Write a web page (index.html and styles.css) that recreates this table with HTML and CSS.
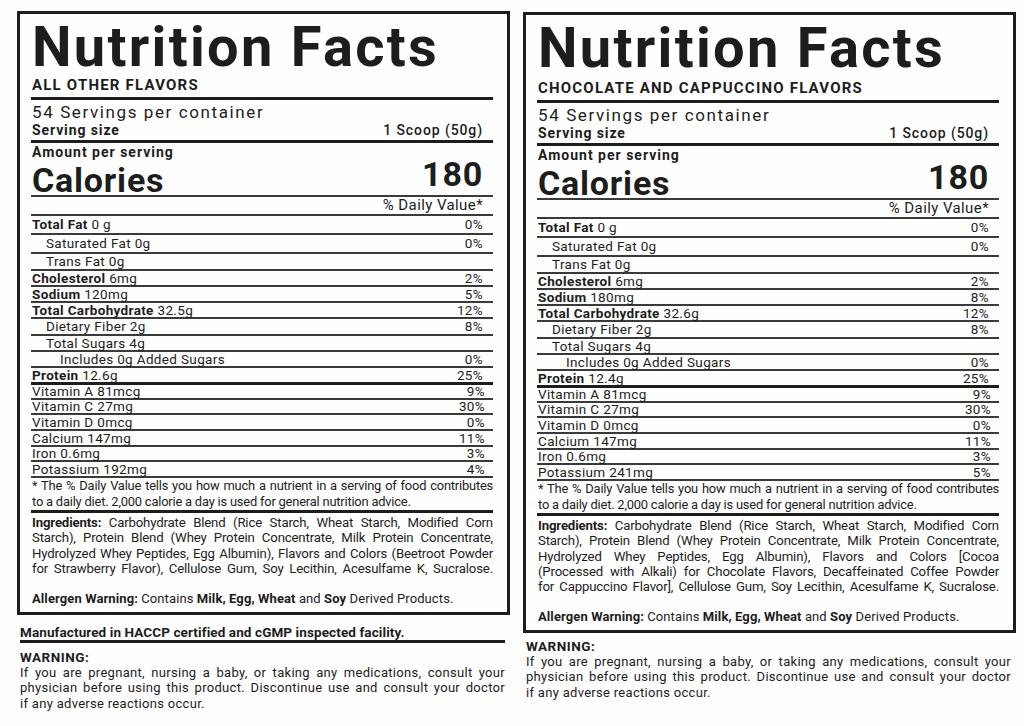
FILE: index.html
```html
<!DOCTYPE html>
<html lang="en">
<head>
<meta charset="utf-8">
<title>Nutrition Facts</title>
<link rel="stylesheet" href="styles.css">
</head>
<body>
<main class="page">
  <section class="col">
    <div class="label">
      <h1 class="title">Nutrition Facts</h1>
      <div class="flavor">ALL OTHER FLAVORS</div>
      <div class="servings">54 Servings per container</div>
      <div class="size"><span>Serving size</span><span>1 Scoop (50g)</span></div>
      <div class="amount">Amount per serving</div>
      <div class="cal"><span>Calories</span><span class="cal-num">180</span></div>
      <div class="dv">% Daily Value*</div>
      <div class="row h17"><span><b>Total Fat</b> 0 g</span><span>0%</span></div>
      <div class="row h17 in1"><span>Saturated Fat 0g</span><span>0%</span></div>
      <div class="row h15 in1"><span>Trans Fat 0g</span><span></span></div>
      <div class="row"><span><b>Cholesterol</b> 6mg</span><span>2%</span></div>
      <div class="row"><span><b>Sodium</b> 120mg</span><span>5%</span></div>
      <div class="row"><span><b>Total Carbohydrate</b> 32.5g</span><span>12%</span></div>
      <div class="row h15 in1"><span>Dietary Fiber 2g</span><span>8%</span></div>
      <div class="row in1"><span>Total Sugars 4g</span><span></span></div>
      <div class="row in2"><span>Includes 0g Added Sugars</span><span>0%</span></div>
      <div class="row thick"><span><b>Protein</b> 12.6g</span><span>25%</span></div>
      <div class="row h13 vit"><span>Vitamin A 81mcg</span><span>9%</span></div>
      <div class="row h13 vit"><span>Vitamin C 27mg</span><span>30%</span></div>
      <div class="row vit"><span>Vitamin D 0mcg</span><span>0%</span></div>
      <div class="row vit"><span>Calcium 147mg</span><span>11%</span></div>
      <div class="row h13 vit"><span>Iron 0.6mg</span><span>3%</span></div>
      <div class="row vit"><span>Potassium 192mg</span><span>4%</span></div>
      <p class="foot"><span class="jl">* The % Daily Value tells you how much a nutrient in a serving of food contributes</span>to a daily diet. 2,000 calorie a day is used for general nutrition advice.</p>
      <p class="ingr"><span class="jl"><b>Ingredients:</b> Carbohydrate Blend (Rice Starch, Wheat Starch, Modified Corn</span><span class="jl">Starch), Protein Blend (Whey Protein Concentrate, Milk Protein Concentrate,</span><span class="jl">Hydrolyzed Whey Peptides, Egg Albumin), Flavors and Colors (Beetroot Powder</span><span class="jl">for Strawberry Flavor), Cellulose Gum, Soy Lecithin, Acesulfame K, Sucralose.</span></p>
      <p class="allergen"><b>Allergen Warning:</b> Contains <b>Milk, Egg, Wheat</b> and <b>Soy</b> Derived Products.</p>
    </div>
    <p class="mfg">Manufactured in HACCP certified and cGMP inspected facility.</p>
    <div class="warn">
      <div class="warn-title">WARNING:</div>
      <p class="warn-text"><span class="jl">If you are pregnant, nursing a baby, or taking any medications, consult your</span><span class="jl">physician before using this product. Discontinue use and consult your doctor</span>if any adverse reactions occur.</p>
    </div>
  </section>

  <section class="col col-alt">
    <div class="label label-alt">
      <h1 class="title">Nutrition Facts</h1>
      <div class="flavor">CHOCOLATE AND CAPPUCCINO FLAVORS</div>
      <div class="servings">54 Servings per container</div>
      <div class="size"><span>Serving size</span><span>1 Scoop (50g)</span></div>
      <div class="amount">Amount per serving</div>
      <div class="cal"><span>Calories</span><span class="cal-num">180</span></div>
      <div class="dv">% Daily Value*</div>
      <div class="row h17"><span><b>Total Fat</b> 0 g</span><span>0%</span></div>
      <div class="row h17 in1"><span>Saturated Fat 0g</span><span>0%</span></div>
      <div class="row h15 in1"><span>Trans Fat 0g</span><span></span></div>
      <div class="row"><span><b>Cholesterol</b> 6mg</span><span>2%</span></div>
      <div class="row"><span><b>Sodium</b> 180mg</span><span>8%</span></div>
      <div class="row"><span><b>Total Carbohydrate</b> 32.6g</span><span>12%</span></div>
      <div class="row h15 in1"><span>Dietary Fiber 2g</span><span>8%</span></div>
      <div class="row in1"><span>Total Sugars 4g</span><span></span></div>
      <div class="row in2"><span>Includes 0g Added Sugars</span><span>0%</span></div>
      <div class="row thick"><span><b>Protein</b> 12.4g</span><span>25%</span></div>
      <div class="row h13 vit"><span>Vitamin A 81mcg</span><span>9%</span></div>
      <div class="row h13 vit"><span>Vitamin C 27mg</span><span>30%</span></div>
      <div class="row vit"><span>Vitamin D 0mcg</span><span>0%</span></div>
      <div class="row vit"><span>Calcium 147mg</span><span>11%</span></div>
      <div class="row h13 vit"><span>Iron 0.6mg</span><span>3%</span></div>
      <div class="row vit"><span>Potassium 241mg</span><span>5%</span></div>
      <p class="foot"><span class="jl">* The % Daily Value tells you how much a nutrient in a serving of food contributes</span>to a daily diet. 2,000 calorie a day is used for general nutrition advice.</p>
      <p class="ingr"><span class="jl"><b>Ingredients:</b> Carbohydrate Blend (Rice Starch, Wheat Starch, Modified Corn</span><span class="jl">Starch), Protein Blend (Whey Protein Concentrate, Milk Protein Concentrate,</span><span class="jl">Hydrolyzed Whey Peptides, Egg Albumin), Flavors and Colors [Cocoa</span><span class="jl">(Processed with Alkali) for Chocolate Flavors, Decaffeinated Coffee Powder</span><span class="jl">for Cappuccino Flavor], Cellulose Gum, Soy Lecithin, Acesulfame K, Sucralose.</span></p>
      <p class="allergen"><b>Allergen Warning:</b> Contains <b>Milk, Egg, Wheat</b> and <b>Soy</b> Derived Products.</p>
    </div>
    <div class="warn warn-alt">
      <div class="warn-title">WARNING:</div>
      <p class="warn-text"><span class="jl">If you are pregnant, nursing a baby, or taking any medications, consult your</span><span class="jl">physician before using this product. Discontinue use and consult your doctor</span>if any adverse reactions occur.</p>
    </div>
  </section>
</main>
</body>
</html>
```

FILE: styles.css
```css
* { box-sizing: border-box; }

html, body {
  margin: 0;
  padding: 0;
  background: #fefefe;
}

body {
  font-family: Roboto, "Liberation Sans", sans-serif;
  color: #1d1d1b;
}

.page {
  display: flex;
  gap: 13px;
  padding: 11px 8px 0 17px;
  width: 1024px;
  height: 726px;
  overflow: hidden;
}

.col {
  width: 493px;
  flex: none;
}

.col-alt { margin-top: 1px; }

.label {
  border: 3px solid #1d1d1b;
  padding: 4px 14px 5px 11px;
}

.title {
  margin: 0 0 0 1px;
  font-size: 56px;
  line-height: 59px;
  font-weight: 700;
  letter-spacing: 2.3px;
  white-space: nowrap;
}

.flavor {
  padding-left: 1px;
  font-size: 15px;
  line-height: 17px;
  font-weight: 700;
  letter-spacing: 1.2px;
  padding-bottom: 3px;
  border-bottom: 3px solid #1d1d1b;
}

.label-alt .flavor { padding-top: 2px; }

.servings {
  margin-top: 2px;
  padding-left: 1px;
  font-size: 17px;
  line-height: 20px;
  letter-spacing: 1.6px;
}

.size {
  display: flex;
  justify-content: space-between;
  font-size: 14px;
  line-height: 16px;
  font-weight: 700;
  letter-spacing: 0.9px;
  padding: 0 10px 2px 1px;
  border-bottom: 3px solid #1d1d1b;
}

.size span:last-child { font-weight: 500; }

.amount {
  margin-top: 1px;
  padding-left: 1px;
  font-size: 14px;
  line-height: 16px;
  font-weight: 700;
  letter-spacing: 1px;
}

.cal {
  margin-top: 5px;
  display: flex;
  justify-content: space-between;
  align-items: flex-start;
  font-size: 34px;
  line-height: 30px;
  font-weight: 700;
  letter-spacing: 0.8px;
  padding: 0 10px 0 1px;
  border-bottom: 2px solid #3a3a3a;
}

.cal-num { line-height: 18px; }

.dv {
  text-align: right;
  font-size: 15px;
  line-height: 17px;
  letter-spacing: 0.4px;
  padding-right: 10px;
  border-bottom: 2px solid #3a3a3a;
}

.row {
  display: flex;
  justify-content: space-between;
  font-size: 13.5px;
  line-height: 14px;
  height: 16px;
  letter-spacing: 0.35px;
  padding: 0 10px 0 1px;
  border-bottom: 2px solid #3a3a3a;
  white-space: nowrap;
}

.row.h13 { height: 15px; line-height: 13px; }
.row.h15 { height: 17px; line-height: 15px; }
.row.h17 { height: 19px; line-height: 16px; }

.row.in1 { padding-left: 15px; }
.row.in2 { padding-left: 29px; }

.row.thick { border-bottom: 3px solid #1d1d1b; height: 17px; }

.row.vit { padding-right: 8px; }

.foot {
  margin: 0;
  font-size: 12.9px;
  line-height: 15.5px;
  padding: 0 0 1px 1px;
  border-bottom: 3px solid #1d1d1b;
  letter-spacing: -0.2px;
}

.jl {
  display: block;
  text-align: justify;
  text-align-last: justify;
}

.ingr {
  margin: 2px 0 0;
  padding-left: 1px;
  font-size: 13.2px;
  line-height: 15.3px;
  letter-spacing: -0.15px;
}

.allergen {
  margin: 15px 0 0;
  padding-left: 1px;
  font-size: 13px;
  line-height: 15.4px;
  letter-spacing: 0.1px;
}

b { font-weight: 700; }

.mfg {
  margin: 9px 5px 0 3px;
  font-size: 13.5px;
  line-height: 16px;
  font-weight: 700;
  letter-spacing: 0.1px;
  border-bottom: 3px solid #1d1d1b;
}

.warn {
  margin: 6px 5px 0 3px;
}

.warn-alt { margin-top: 5px; }

.warn-title {
  font-size: 13.5px;
  line-height: 16px;
  font-weight: 700;
  letter-spacing: 0.5px;
}

.warn-text {
  margin: 0;
  font-size: 13px;
  line-height: 15.5px;
  letter-spacing: 0.3px;
}
```
